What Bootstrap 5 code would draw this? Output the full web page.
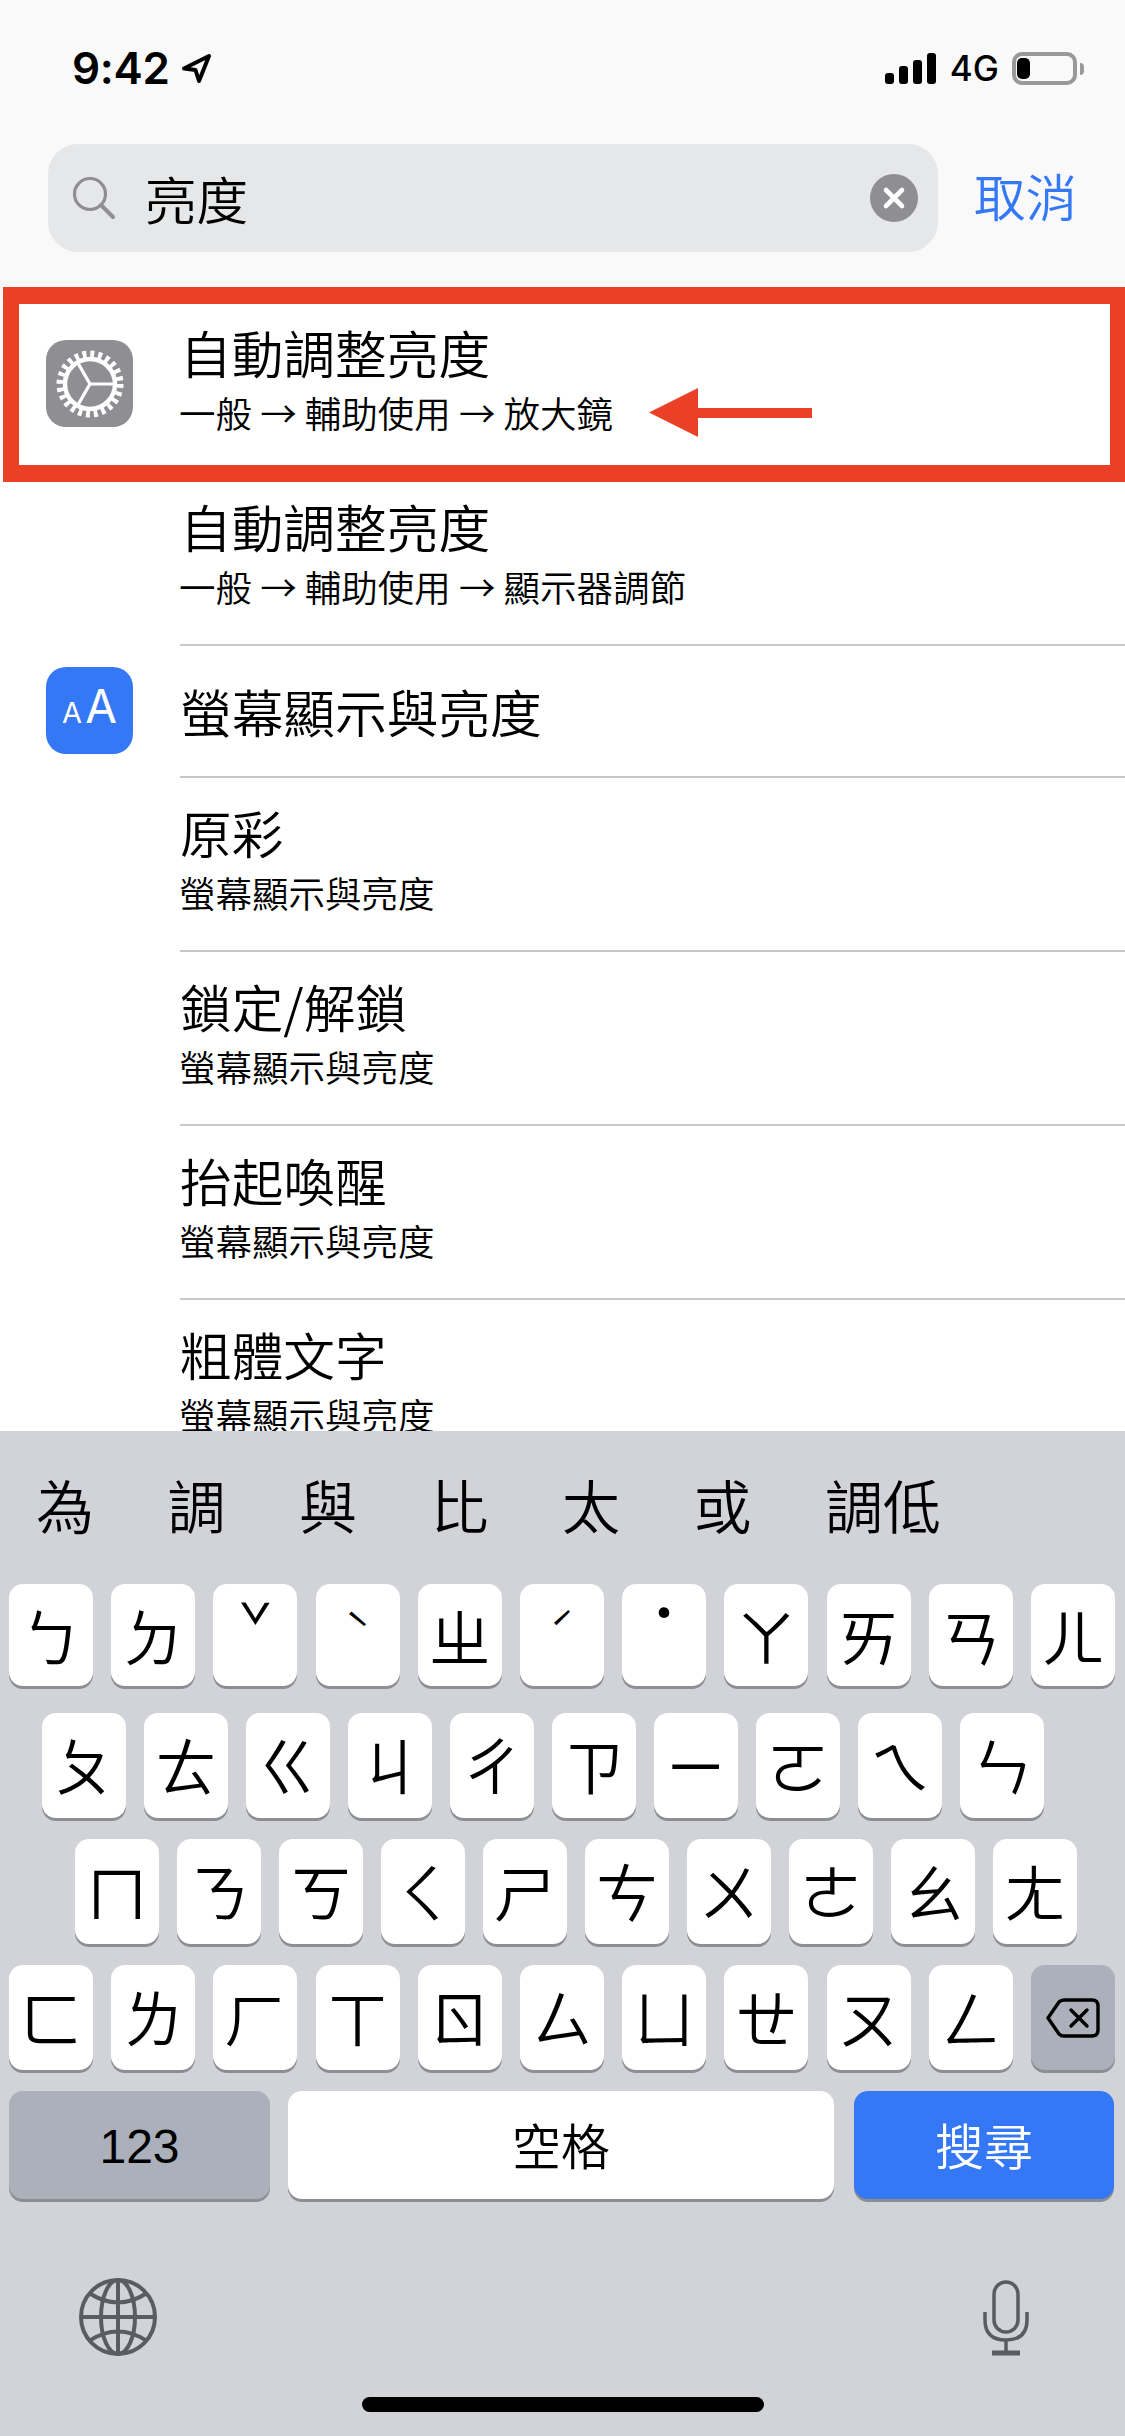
<!DOCTYPE html>
<html lang="zh-Hant">
<head>
<meta charset="utf-8">
<title>設定搜尋</title>
<link href="https://cdn.jsdelivr.net/npm/bootstrap@5.3.0/dist/css/bootstrap.min.css" rel="stylesheet">
<style>
html,body{margin:0;background:#fff}
.phone{position:relative;width:1125px;height:2436px;overflow:hidden;font-family:"Noto Sans CJK TC","Noto Sans CJK JP",sans-serif;color:#000;font-weight:350}
.head{height:298px;background:#f9f9f9;flex:none}
.status{height:144px;padding:52px 41px 0 72px}
.clock{font:600 44px/33px Inter,"Liberation Sans",sans-serif;letter-spacing:-.3px}
.loc{margin-left:11px;margin-top:1px}
.bars{gap:5px;height:31px;margin-top:-1px}
.bars i{display:block;width:9px;background:#000;border-radius:3px}
.b1{height:11px}.b2{height:18px}.b3{height:24px}.b4{height:31px}
.net{font:500 35px/33px Inter,"Liberation Sans",sans-serif;margin:0 13px 0 14px}
.batt{width:65px;height:33px;border:4px solid #999;border-radius:10px;padding:2px 1px}
.batt i{display:block;width:13px;height:100%;background:#000;border-radius:5px}
.nub{width:4px;height:12px;background:#999;border-radius:0 4px 4px 0;margin-left:3px}
.searchrow{padding-left:48px;height:108px}
.sbox{width:890px;height:108px;background:#e6e7e8;border-radius:30px;padding:0 20px 0 24px}
.stext{font-size:51.5px;line-height:102px;margin-left:29px}
.clear{width:48px;height:48px;background:#8e8e93;border-radius:50%}
.cancel{font-size:51.5px;color:#3478f6;margin-left:36px;line-height:102px}
.results{height:1133px;overflow:hidden;flex:none;background:#fff}
.slot{width:180px;flex:none;padding:0 0 3px 46px}
.appicon{width:87px;height:87px;border-radius:20px}
.grey{background:#8e8e93}
.blue{background:#3478f6;color:#fff;font-family:Inter,"Liberation Sans",sans-serif;font-weight:400;gap:3px;line-height:1}
.asm{font-size:29px}.alg{font-size:46px}
.rowbody{border-bottom:2px solid #c8c7cc;flex-grow:1}
.tall{height:174px;padding-top:24px}
.short{height:132px}
.ttl{font-size:51.7px;line-height:60px}
.sub{font-size:36.5px;line-height:60px;margin:1px 0 0 -1px}
.frame{position:absolute;left:3px;right:0;top:287px;height:195px;border:solid #ea4025;border-width:17px 15px 17px 16px}
.arrow{position:absolute;left:649px;top:388px}
.kb{background:#d1d3d9;flex-grow:1;position:relative}
.cands{height:153px;font-size:58px;padding:43px 0 0 36px;gap:73.5px;line-height:60px}
.krow{gap:18px;padding-left:9px}
.key{width:84px;height:102px;background:#fff;border-radius:14px;box-shadow:0 3px 0 #8d8e93;font-size:62px;line-height:102px;text-align:center;flex:none}
.tcaron{line-height:82px;font-size:58px}
.tstroke{line-height:91px;font-size:44px}
.tdot{line-height:52px;font-size:58px}
.r1{margin-bottom:27px;gap:18.2px}.r2{margin-bottom:21px;padding-left:42px}.r2 .key{height:105px}
.r3{margin-bottom:21px;padding-left:75px}.r3 .key{height:105px}
.r4{margin-bottom:21px;gap:18.2px}.r4 .key{height:105px}
.dark{background:#abb0ba}
.r5 .key{height:108px;font-size:49px;line-height:106px}
.w123{width:261px;font:400 48px/111px "Liberation Sans",sans-serif!important;background:#abb0ba}
.wspace{width:546px;margin-left:0}
.wgo{width:260px;background:#3478f6;color:#fff;margin-left:2px}
.globe{padding:79px 0 0 79px}
.micw{padding:81px 96px 0 0}
.homebar{position:absolute;left:362px;top:966px;width:402px;height:15px;border-radius:8px;background:#000}
</style>
</head>
<body>
<div class="phone d-flex flex-column">
  <header class="head">
    <div class="status d-flex justify-content-between align-items-start">
      <div class="d-flex align-items-start">
        <span class="clock">9:42</span>
        <svg class="loc" width="31" height="31" viewBox="0 0 31 31"><path d="M3 15.5 28 3 18 28 14.5 17Z" fill="none" stroke="#000" stroke-width="4" stroke-linejoin="round"/></svg>
      </div>
      <div class="d-flex align-items-center">
        <div class="bars d-flex align-items-end"><i class="b1"></i><i class="b2"></i><i class="b3"></i><i class="b4"></i></div>
        <span class="net">4G</span>
        <div class="batt"><i></i></div>
        <div class="nub"></div>
      </div>
    </div>
    <div class="searchrow d-flex">
      <div class="sbox d-flex align-items-center">
        <svg width="44" height="44" viewBox="0 0 44 44" class="flex-none"><circle cx="18" cy="18" r="15.5" fill="none" stroke="#8e8e93" stroke-width="3.2"/><path d="M29 29 41 41" stroke="#8e8e93" stroke-width="4" stroke-linecap="round"/></svg>
        <span class="stext flex-grow-1">亮度</span>
        <div class="clear d-flex align-items-center justify-content-center"><svg width="24" height="24" viewBox="0 0 24 24"><path d="M4 4 20 20M20 4 4 20" stroke="#fff" stroke-width="4.6" stroke-linecap="round"/></svg></div>
      </div>
      <span class="cancel">取消</span>
    </div>
  </header>

  <main class="results">
    <div class="d-flex">
      <div class="slot d-flex align-items-center">
        <div class="appicon grey d-flex align-items-center justify-content-center">
          <svg width="70" height="70" viewBox="0 0 70 70"><circle cx="35" cy="35" r="30" fill="none" stroke="#fff" stroke-width="7" stroke-dasharray="3.93 3.93"/><circle cx="35" cy="35" r="25" fill="none" stroke="#fff" stroke-width="4.5"/><path d="M35 35H60M35 35 22.5 13.4M35 35 22.5 56.6" stroke="#fff" stroke-width="3.2"/></svg>
        </div>
      </div>
      <div class="rowbody tall"><div class="ttl">自動調整亮度</div><div class="sub">一般 → 輔助使用 → 放大鏡</div></div>
    </div>
    <div class="d-flex">
      <div class="slot"></div>
      <div class="rowbody tall"><div class="ttl">自動調整亮度</div><div class="sub">一般 → 輔助使用 → 顯示器調節</div></div>
    </div>
    <div class="d-flex">
      <div class="slot d-flex align-items-center">
        <div class="appicon blue d-flex align-items-baseline justify-content-center pt-3"><span class="asm">A</span><span class="alg">A</span></div>
      </div>
      <div class="rowbody short d-flex align-items-center"><div class="ttl">螢幕顯示與亮度</div></div>
    </div>
    <div class="d-flex"><div class="slot"></div><div class="rowbody tall"><div class="ttl">原彩</div><div class="sub">螢幕顯示與亮度</div></div></div>
    <div class="d-flex"><div class="slot"></div><div class="rowbody tall"><div class="ttl">鎖定/解鎖</div><div class="sub">螢幕顯示與亮度</div></div></div>
    <div class="d-flex"><div class="slot"></div><div class="rowbody tall"><div class="ttl">抬起喚醒</div><div class="sub">螢幕顯示與亮度</div></div></div>
    <div class="d-flex"><div class="slot"></div><div class="rowbody tall"><div class="ttl">粗體文字</div><div class="sub">螢幕顯示與亮度</div></div></div>
  </main>

  <section class="kb">
    <div class="cands d-flex"><span>為</span><span>調</span><span>與</span><span>比</span><span>太</span><span>或</span><span>調低</span></div>
    <div class="krow r1 d-flex"><div class="key">ㄅ</div><div class="key">ㄉ</div><div class="key tcaron">ˇ</div><div class="key tstroke">ˋ</div><div class="key">ㄓ</div><div class="key tstroke">ˊ</div><div class="key tdot">˙</div><div class="key">ㄚ</div><div class="key">ㄞ</div><div class="key">ㄢ</div><div class="key">ㄦ</div></div>
    <div class="krow r2 d-flex"><div class="key">ㄆ</div><div class="key">ㄊ</div><div class="key">ㄍ</div><div class="key">ㄐ</div><div class="key">ㄔ</div><div class="key">ㄗ</div><div class="key">ㄧ</div><div class="key">ㄛ</div><div class="key">ㄟ</div><div class="key">ㄣ</div></div>
    <div class="krow r3 d-flex"><div class="key">ㄇ</div><div class="key">ㄋ</div><div class="key">ㄎ</div><div class="key">ㄑ</div><div class="key">ㄕ</div><div class="key">ㄘ</div><div class="key">ㄨ</div><div class="key">ㄜ</div><div class="key">ㄠ</div><div class="key">ㄤ</div></div>
    <div class="krow r4 d-flex"><div class="key">ㄈ</div><div class="key">ㄌ</div><div class="key">ㄏ</div><div class="key">ㄒ</div><div class="key">ㄖ</div><div class="key">ㄙ</div><div class="key">ㄩ</div><div class="key">ㄝ</div><div class="key">ㄡ</div><div class="key">ㄥ</div>
      <div class="key dark d-flex align-items-center justify-content-center"><svg width="54" height="40" viewBox="0 0 54 40"><path d="M2 20 13 4Q15 2 18 2H46Q52 2 52 8V32Q52 38 46 38H18Q15 38 13 36Z" fill="none" stroke="#000" stroke-width="3.4" stroke-linejoin="round"/><path d="M25 12 41 28M41 12 25 28" stroke="#000" stroke-width="3.4" stroke-linecap="round"/></svg></div>
    </div>
    <div class="krow r5 d-flex"><div class="key w123">123</div><div class="key wspace">空格</div><div class="key wgo">搜尋</div></div>
    <div class="d-flex justify-content-between">
      <div class="globe"><svg width="78" height="78" viewBox="0 0 78 78" fill="none" stroke="#5b5c61" stroke-width="4"><circle cx="39" cy="39" r="37"/><ellipse cx="39" cy="39" rx="17" ry="37"/><path d="M39 2V76M2 39H76M10 15Q39 34 68 15M10 63Q39 44 68 63"/></svg></div>
      <div class="micw"><svg width="46" height="76" viewBox="0 0 46 76" fill="none" stroke="#5b5c61" stroke-width="3.5"><rect x="11" y="2" width="24" height="50" rx="12"/><path d="M2 32V40Q2 60 23 60T44 40V32"/><path d="M23 60V72"/><path d="M9 73H37" stroke-width="5"/></svg></div>
    </div>
    <div class="homebar"></div>
  </section>

  <div class="frame"></div>
  <svg class="arrow" width="163" height="49" viewBox="0 0 163 49"><path d="M0 24.5 49 0V20H163V30H49V49Z" fill="#ea4025"/></svg>
</div>
<script src="https://cdn.jsdelivr.net/npm/bootstrap@5.3.0/dist/js/bootstrap.bundle.min.js"></script>
</body>
</html>
